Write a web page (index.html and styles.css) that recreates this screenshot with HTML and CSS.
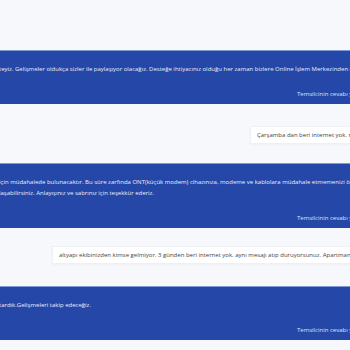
FILE: index.html
```html
<!DOCTYPE html>
<html lang="tr">
<head>
  <meta charset="UTF-8">
  <meta name="viewport" content="width=device-width, initial-scale=1.0">
  <title>Destek Talebi Mesajları</title>
  <link rel="stylesheet" href="styles.css">
</head>
<body>
  <div class="chat">
    <div class="agent-msg">
      <div class="msg-body">
        <p>teyiz. Gelişmeler oldukça sizler ile paylaşıyor olacağız. Desteğe ihtiyacınız olduğu her zaman bizlere Online İşlem Merkezinden ulaşabilirsiniz.</p>
      </div>
      <div class="msg-footer">Temsilcinin cevabı yardımcı oldu mu?</div>
    </div>

    <div class="user-row user-row-first">
      <div class="user-msg user-msg-right">Çarşamba dan beri internet yok. ne zaman gelecek?</div>
    </div>

    <div class="agent-msg">
      <div class="msg-body">
        <p>için müdahalede bulunacaktır. Bu süre zarfında ONT(küçük modem) cihazınıza, modeme ve kablolara müdahale etmemenizi önemle rica ederiz.</p>
        <p>laşabilirsiniz. Anlayışınız ve sabrınız için teşekkür ederiz.</p>
      </div>
      <div class="msg-footer">Temsilcinin cevabı yardımcı oldu mu?</div>
    </div>

    <div class="user-row user-row-second">
      <div class="user-msg user-msg-left">altyapı ekibinizden kimse gelmiyor. 3 günden beri internet yok. aynı mesajı atıp duruyorsunuz. Apartman girişi</div>
    </div>

    <div class="agent-msg">
      <div class="msg-body">
        <p>tardık.Gelişmeleri takip edeceğiz.</p>
      </div>
      <div class="msg-footer">Temsilcinin cevabı yardımcı oldu mu?</div>
    </div>
  </div>
</body>
</html>
```

FILE: styles.css
```css
html, body {
  margin: 0;
  padding: 0;
  background-color: #f6f8fc;
  overflow: hidden;
}

body {
  font-family: "Open Sans", "Liberation Sans", sans-serif;
  font-size: 6px;
}

.chat {
  padding-top: 50px;
}

.agent-msg {
  background-color: #2447a8;
  border-top: 1px solid #7e9bd8;
  color: #e9eefb;
  padding: 13px 0 4px 0;
  white-space: nowrap;
  overflow: hidden;
}

.msg-body p {
  margin: 0;
  line-height: 11px;
  text-indent: -1px;
}

.msg-footer {
  margin-top: 14px;
  line-height: 11px;
  padding-left: 297px;
  color: #dbe4fa;
}

.user-row {
  white-space: nowrap;
  overflow: hidden;
}

.user-row-first {
  padding: 22px 0 19px 0;
}

.user-row-second {
  padding: 18px 0 22px 0;
}

.user-msg {
  display: inline-block;
  background-color: #ffffff;
  border: 1px solid #eef0f5;
  border-right: none;
  box-shadow: 0 1px 2px rgba(0, 0, 0, 0.04);
  color: #444;
  line-height: 16px;
  padding: 0 6px;
}

.user-msg-right {
  margin-left: 250px;
}

.user-msg-left {
  margin-left: 52px;
}
```
